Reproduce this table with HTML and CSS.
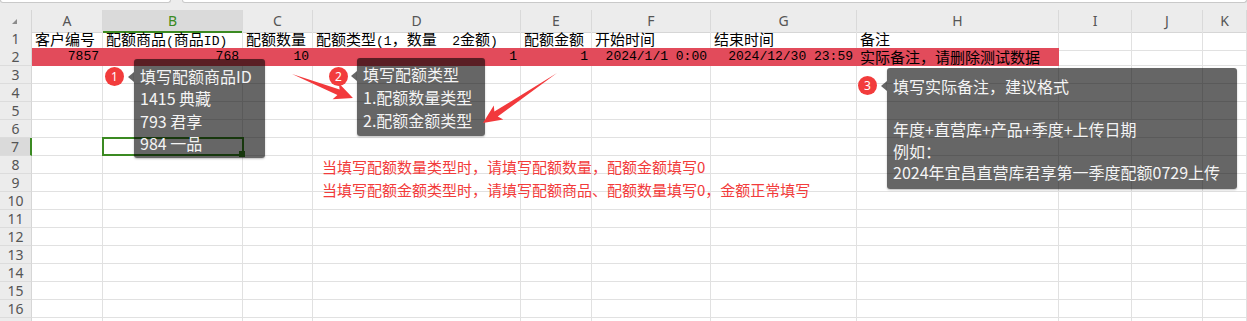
FILE: index.html
```html
<!DOCTYPE html>
<html lang="zh-CN">
<head>
<meta charset="utf-8">
<title>配额导入模板</title>
<link rel="stylesheet" href="styles.css">
</head>
<body>
<div class="topbar"><div class="fbox name"></div><div class="fbox formula"></div></div>
<div class="sheet">
  <div class="row head">
    <div class="corner"><span class="tri"></span></div>
    <div class="ch">A</div><div class="ch on">B</div><div class="ch">C</div><div class="ch">D</div><div class="ch">E</div><div class="ch">F</div><div class="ch">G</div><div class="ch">H</div><div class="ch">I</div><div class="ch">J</div><div class="ch">K</div>
  </div>
  <div class="row">
    <div class="rh">1</div>
    <div class="c">客户编号</div>
    <div class="c">配额商品<span class="m">(</span>商品<span class="m">ID)</span></div>
    <div class="c">配额数量</div>
    <div class="c">配额类型<span class="m">(1</span>，数量<span class="m">  2</span>金额<span class="m">)</span></div>
    <div class="c">配额金额</div>
    <div class="c">开始时间</div>
    <div class="c">结束时间</div>
    <div class="c">备注</div>
    <div class="c"></div><div class="c"></div><div class="c"></div>
  </div>
  <div class="row">
    <div class="rh">2</div>
    <div class="c red num">7857</div>
    <div class="c red num">768</div>
    <div class="c red num">10</div>
    <div class="c red num">1</div>
    <div class="c red num">1</div>
    <div class="c red num">2024/1/1 0:00</div>
    <div class="c red num">2024/12/30 23:59</div>
    <div class="c red">实际备注，请删除测试数据</div>
    <div class="c"></div><div class="c"></div><div class="c"></div>
  </div>
  <div class="row"><div class="rh">3</div><div class="c"></div><div class="c"></div><div class="c"></div><div class="c"></div><div class="c"></div><div class="c"></div><div class="c"></div><div class="c"></div><div class="c"></div><div class="c"></div><div class="c"></div></div>
  <div class="row"><div class="rh">4</div><div class="c"></div><div class="c"></div><div class="c"></div><div class="c"></div><div class="c"></div><div class="c"></div><div class="c"></div><div class="c"></div><div class="c"></div><div class="c"></div><div class="c"></div></div>
  <div class="row"><div class="rh">5</div><div class="c"></div><div class="c"></div><div class="c"></div><div class="c"></div><div class="c"></div><div class="c"></div><div class="c"></div><div class="c"></div><div class="c"></div><div class="c"></div><div class="c"></div></div>
  <div class="row"><div class="rh">6</div><div class="c"></div><div class="c"></div><div class="c"></div><div class="c"></div><div class="c"></div><div class="c"></div><div class="c"></div><div class="c"></div><div class="c"></div><div class="c"></div><div class="c"></div></div>
  <div class="row"><div class="rh on">7</div><div class="c"></div><div class="c sel"></div><div class="c"></div><div class="c"></div><div class="c"></div><div class="c"></div><div class="c"></div><div class="c"></div><div class="c"></div><div class="c"></div><div class="c"></div></div>
  <div class="row"><div class="rh">8</div><div class="c"></div><div class="c"></div><div class="c"></div><div class="c"></div><div class="c"></div><div class="c"></div><div class="c"></div><div class="c"></div><div class="c"></div><div class="c"></div><div class="c"></div></div>
  <div class="row"><div class="rh">9</div><div class="c"></div><div class="c"></div><div class="c"></div><div class="c"></div><div class="c"></div><div class="c"></div><div class="c"></div><div class="c"></div><div class="c"></div><div class="c"></div><div class="c"></div></div>
  <div class="row"><div class="rh">10</div><div class="c"></div><div class="c"></div><div class="c"></div><div class="c"></div><div class="c"></div><div class="c"></div><div class="c"></div><div class="c"></div><div class="c"></div><div class="c"></div><div class="c"></div></div>
  <div class="row"><div class="rh">11</div><div class="c"></div><div class="c"></div><div class="c"></div><div class="c"></div><div class="c"></div><div class="c"></div><div class="c"></div><div class="c"></div><div class="c"></div><div class="c"></div><div class="c"></div></div>
  <div class="row"><div class="rh">12</div><div class="c"></div><div class="c"></div><div class="c"></div><div class="c"></div><div class="c"></div><div class="c"></div><div class="c"></div><div class="c"></div><div class="c"></div><div class="c"></div><div class="c"></div></div>
  <div class="row"><div class="rh">13</div><div class="c"></div><div class="c"></div><div class="c"></div><div class="c"></div><div class="c"></div><div class="c"></div><div class="c"></div><div class="c"></div><div class="c"></div><div class="c"></div><div class="c"></div></div>
  <div class="row"><div class="rh">14</div><div class="c"></div><div class="c"></div><div class="c"></div><div class="c"></div><div class="c"></div><div class="c"></div><div class="c"></div><div class="c"></div><div class="c"></div><div class="c"></div><div class="c"></div></div>
  <div class="row"><div class="rh">15</div><div class="c"></div><div class="c"></div><div class="c"></div><div class="c"></div><div class="c"></div><div class="c"></div><div class="c"></div><div class="c"></div><div class="c"></div><div class="c"></div><div class="c"></div></div>
  <div class="row"><div class="rh">16</div><div class="c"></div><div class="c"></div><div class="c"></div><div class="c"></div><div class="c"></div><div class="c"></div><div class="c"></div><div class="c"></div><div class="c"></div><div class="c"></div><div class="c"></div></div>
  <div class="row"><div class="rh"></div><div class="c"></div><div class="c"></div><div class="c"></div><div class="c"></div><div class="c"></div><div class="c"></div><div class="c"></div><div class="c"></div><div class="c"></div><div class="c"></div><div class="c"></div></div>
</div>

<svg class="arrows" width="1247" height="321" viewBox="0 0 1247 321" aria-hidden="true">
  <g transform="translate(292 74) rotate(21.5)">
    <polygon points="0,0 50,-3 47,-8.5 65.5,0 47,8.5 50,3"/>
  </g>
  <g transform="translate(557 73) rotate(146)">
    <polygon points="0,0 73.5,-3 70.5,-8.5 89.3,0 70.5,8.5 73.5,3"/>
  </g>
</svg>

<div class="badge b1">1</div>
<div class="tip t1">
  <div>填写配额商品ID</div>
  <div>1415 典藏</div>
  <div>793 君享</div>
  <div>984 一品</div>
</div>

<div class="badge b2">2</div>
<div class="tip t2">
  <div>填写配额类型</div>
  <div>1.配额数量类型</div>
  <div>2.配额金额类型</div>
</div>

<div class="badge b3">3</div>
<div class="tip t3">
  <div>填写实际备注，建议格式</div>
  <div>&nbsp;</div>
  <div>年度+直营库+产品+季度+上传日期</div>
  <div>例如：</div>
  <div>2024年宜昌直营库君享第一季度配额0729上传</div>
</div>

<div class="note">
  <div>当填写配额数量类型时，请填写配额数量，配额金额填写0</div>
  <div>当填写配额金额类型时，请填写配额商品、配额数量填写0，金额正常填写</div>
</div>
</body>
</html>
```
FILE: styles.css
```css
html, body {
  margin: 0;
  padding: 0;
}
body {
  position: relative;
  width: 1247px;
  height: 321px;
  overflow: hidden;
  background: #fff;
  font-family: "Noto Sans CJK SC", "Noto Sans", sans-serif;
  color: #000;
}

/* formula bar remnants */
.topbar {
  height: 10px;
  background: #ececec;
  display: flex;
  gap: 11px;
  align-items: flex-start;
}
.fbox {
  height: 2px;
  background: #fff;
  border: 1px solid #c9c9c9;
  border-top: none;
  border-radius: 0 0 4px 4px;
}
.fbox.name { width: 169px; }
.fbox.formula { flex: 1; }

/* sheet grid */
.sheet {
  display: flex;
  flex-direction: column;
}
.row {
  display: grid;
  grid-template-columns: 32px 71px 140px 70px 208px 71px 119px 146px 202px 73px 71px 44px;
  height: 18px;
}
.row.head { height: 20px; }

.corner {
  background: #ececec;
  border-right: 1px solid #d6d6d6;
  border-bottom: 1px solid #d6d6d6;
  box-sizing: border-box;
  padding: 9px 0 0 12px;
}
.tri {
  display: block;
  width: 0;
  height: 0;
  border-left: 5px solid transparent;
  border-bottom: 5px solid #8c8c8c;
}
.ch {
  background: #ececec;
  border-right: 1px solid #d9d9d9;
  border-bottom: 1px solid #d6d6d6;
  box-sizing: border-box;
  text-align: center;
  font-family: "Noto Sans", "Open Sans", sans-serif;
  font-size: 14px;
  line-height: 21px;
  color: #555;
}
.ch.on {
  background: #dadada;
  color: #3b8a22;
  border-bottom: 2px solid #3b8a22;
}
.rh {
  background: #ececec;
  border-right: 1px solid #d6d6d6;
  border-bottom: 1px solid #dcdcdc;
  box-sizing: border-box;
  text-align: center;
  font-family: "Noto Sans", "Open Sans", sans-serif;
  font-size: 14px;
  line-height: 17px;
  color: #555;
}
.rh.on {
  background: #dadada;
  border-right: 2px solid #3b8a22;
}
.c {
  border-right: 1px solid #e1e1e1;
  border-bottom: 1px solid #e1e1e1;
  box-sizing: border-box;
  padding: 0 3px;
  font-size: 15px;
  line-height: 17px;
  white-space: pre;
  overflow: visible;
}
.m, .num {
  font-family: "Liberation Mono", "DejaVu Sans Mono", monospace;
  font-size: 13px;
}
.num { text-align: right; }
.red {
  background: #e24b5b;
  border-right-color: #e24b5b;
  border-bottom-color: #e24b5b;
}
.sel { position: relative; }
.sel::after {
  content: "";
  position: absolute;
  left: -1px;
  top: -1px;
  right: -2px;
  bottom: -1px;
  border: 2px solid #3b8a22;
}
.sel::before {
  content: "";
  position: absolute;
  right: -3px;
  bottom: -2px;
  width: 6px;
  height: 6px;
  background: #3b8a22;
  z-index: 1;
}

/* overlays */
.arrows {
  position: absolute;
  left: 0;
  top: 0;
  z-index: 3;
}
.arrows polygon { fill: #f2393c; }

.badge {
  position: absolute;
  z-index: 3;
  width: 19px;
  height: 19px;
  border-radius: 50%;
  background: #f23c3c;
  color: #fff;
  font-family: "Noto Sans", sans-serif;
  font-size: 12px;
  line-height: 19px;
  text-align: center;
}
.b1 { left: 105px; top: 67px; }
.b2 { left: 329px; top: 67px; }
.b3 { left: 858px; top: 76px; }

.tip {
  position: absolute;
  z-index: 2;
  box-sizing: border-box;
  background: rgba(0, 0, 0, 0.6);
  border-radius: 3px;
  box-shadow: 0 1px 2px rgba(0, 0, 0, 0.25);
  color: #f4f4f4;
  font-size: 16px;
  padding: 0 6px;
  white-space: nowrap;
}
.tip::before {
  content: "";
  position: absolute;
  left: -6px;
  top: 13px;
  width: 0;
  height: 0;
  border-top: 5px solid transparent;
  border-bottom: 5px solid transparent;
  border-right: 6px solid rgba(0, 0, 0, 0.6);
}
.t1 {
  left: 134px;
  top: 59px;
  width: 131px;
  height: 99px;
  padding-top: 6px;
  line-height: 22.3px;
}
.t2 {
  left: 357px;
  top: 58px;
  width: 128px;
  height: 78px;
  padding-top: 5px;
  line-height: 23px;
}
.t3 {
  left: 887px;
  top: 68px;
  width: 350px;
  height: 121px;
  padding-top: 8px;
  line-height: 21.5px;
}

.note {
  position: absolute;
  z-index: 2;
  left: 322px;
  top: 155px;
  color: #f23b3b;
  font-size: 15px;
  line-height: 23px;
  white-space: nowrap;
}
```
